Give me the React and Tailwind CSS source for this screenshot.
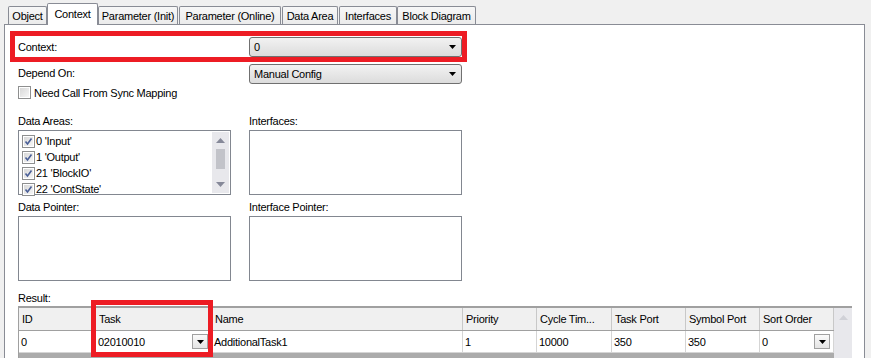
import React from 'react';

const tabs = [
    { label: 'Object', w: 'w-[39px]', ml: '' },
    { label: 'Context', w: 'w-[51px]', ml: '', active: true },
    { label: 'Parameter (Init)', w: 'w-[80px]', ml: '' },
    { label: 'Parameter (Online)', w: 'w-[102px]', ml: 'ml-[1px]' },
    { label: 'Data Area', w: 'w-[56px]', ml: 'ml-[1px]' },
    { label: 'Interfaces', w: 'w-[58px]', ml: 'ml-[1px]' },
    { label: 'Block Diagram', w: 'w-[79px]', ml: '' },
];

const dataAreas = ["0 'Input'", "1 'Output'", "21 'BlockIO'", "22 'ContState'"];

const columns = [
    { label: 'ID', value: '0' },
    { label: 'Task', value: '02010010', drop: true },
    { label: 'Name', value: 'AdditionalTask1' },
    { label: 'Priority', value: '1' },
    { label: 'Cycle Tim...', value: '10000' },
    { label: 'Task Port', value: '350' },
    { label: 'Symbol Port', value: '350' },
    { label: 'Sort Order', value: '0', drop: true },
];

const Arrow = () => (
    <svg width="7" height="4" viewBox="0 0 7 4" className="block">
        <path d="M0 0 H7 L3.5 4 Z" fill="#000" />
    </svg>
);

const Combo = ({ value }) => (
    <div className="w-[213px] h-[20px] rounded-[3px] border border-[#707070] bg-gradient-to-b from-[#f2f2f2] to-[#dcdcdc] flex items-center pl-[4px] pr-[5px]">
        <span className="flex-1">{value}</span>
        <Arrow />
    </div>
);

const CheckBox = ({ checked }) => (
    <div className="w-[13px] h-[13px] border border-[#8e8f8f] bg-white p-[1px] shrink-0">
        <div className="w-full h-full bg-gradient-to-br from-[#d8d8d8] to-[#f6f6f6] relative">
            {checked && (
                <svg width="9" height="9" viewBox="0 0 9 9" className="absolute left-0 top-0">
                    <path d="M1.5 4.5 L3.5 7 L7.5 1.5" stroke="#4a5f97" strokeWidth="1.6" fill="none" />
                </svg>
            )}
        </div>
    </div>
);

const Box = ({ children }) => (
    <div className="w-[213px] h-[65px] border border-[#828790] bg-white">{children}</div>
);

const CellDrop = () => (
    <div className="w-[16px] h-[15px] border border-[#a0a0a0] bg-gradient-to-b from-[#fafafa] to-[#e4e4e4] flex items-center justify-center">
        <Arrow />
    </div>
);

export default function App() {
    return (
        <div
            className="w-[871px] h-[358px] bg-[#f0f0f0] overflow-hidden relative text-[11px] leading-[14px] text-black tracking-[-0.25px]"
            style={{ fontFamily: '"Liberation Sans", Arial, sans-serif' }}
        >
            <div className="flex items-end h-[24px] pl-[8px]">
                {tabs.map((t) =>
                    t.active ? (
                        <div
                            key={t.label}
                            className={`${t.w} h-[22px] -mb-[1px] relative z-10 bg-white border border-b-0 border-[#898c95] rounded-t-[2px] flex justify-center pt-[3px]`}
                        >
                            {t.label}
                        </div>
                    ) : (
                        <div
                            key={t.label}
                            className={`${t.w} ${t.ml} h-[18px] bg-gradient-to-b from-[#f7f7f7] to-[#ebebeb] border border-b-0 border-[#898c95] rounded-t-[2px] flex justify-center pt-[2px]`}
                        >
                            {t.label}
                        </div>
                    )
                )}
            </div>

            <div className="ml-[4px] w-[861px] h-[334px] bg-white border-t border-l border-r border-[#898c95] pl-[13px] pt-[12px]">
                <div className="flex h-[20px]">
                    <div className="w-[231px] pt-[3px]">Context:</div>
                    <Combo value="0" />
                </div>
                <div className="flex h-[20px] mt-[7px]">
                    <div className="w-[231px] pt-[2px]">Depend On:</div>
                    <Combo value="Manual Config" />
                </div>
                <div className="flex items-center h-[13px] mt-[2px] gap-[3px]">
                    <CheckBox />
                    <span>Need Call From Sync Mapping</span>
                </div>

                <div className="flex gap-[18px] mt-[15px]">
                    <div>
                        <div className="h-[16px]">Data Areas:</div>
                        <Box>
                            <div className="flex h-full">
                                <div className="flex-1 pl-[3px] pt-[2px]">
                                    {dataAreas.map((d) => (
                                        <div key={d} className="flex items-center gap-[1px] h-[16px]">
                                            <CheckBox checked />
                                            <span>{d}</span>
                                        </div>
                                    ))}
                                </div>
                                <div className="w-[17px] mr-[1px] my-[1px] bg-[#e8e8ec] flex flex-col items-center justify-between py-[6px]">
                                    <svg width="9" height="5" viewBox="0 0 9 5"><path d="M0 5 L4.5 0 L9 5 Z" fill="#868999" /></svg>
                                    <div className="w-[9px] h-[20px] bg-[#c2c3c9] -mt-[8px]" />
                                    <svg width="9" height="5" viewBox="0 0 9 5"><path d="M0 0 L9 0 L4.5 5 Z" fill="#868999" /></svg>
                                </div>
                            </div>
                        </Box>
                    </div>
                    <div>
                        <div className="h-[16px]">Interfaces:</div>
                        <Box />
                    </div>
                </div>

                <div className="flex gap-[18px] mt-[5px]">
                    <div>
                        <div className="h-[16px]">Data Pointer:</div>
                        <Box />
                    </div>
                    <div>
                        <div className="h-[16px]">Interface Pointer:</div>
                        <Box />
                    </div>
                </div>

                <div className="h-[17px] mt-[8px] pt-[2px]">Result:</div>
                <div className="flex w-[834px] h-[60px] border-l border-t-2 border-[#a0a0a0]">
                    <div className="w-[815px] flex flex-col">
                        <div className="grid grid-cols-[77px_116px_251px_74px_75px_74px_74px_74px] h-[23px] bg-[#f0f0f0] border-b border-[#a0a0a0]">
                            {columns.map((c) => (
                                <div key={c.label} className="border-r border-[#c8c8c8] pl-[3px] flex items-center whitespace-nowrap overflow-hidden">
                                    {c.label}
                                </div>
                            ))}
                        </div>
                        <div className="grid grid-cols-[77px_116px_251px_74px_75px_74px_74px_74px] h-[22px] bg-white border-b border-[#d5d5d5]">
                            {columns.map((c) => (
                                <div key={c.label} className="border-r border-[#d5d5d5] pl-[2px] pr-[3px] flex items-center whitespace-nowrap">
                                    <span className="flex-1">{c.value}</span>
                                    {c.drop && <CellDrop />}
                                </div>
                            ))}
                        </div>
                        <div className="flex-1 bg-[#ababab]" />
                    </div>
                    <div className="w-[19px] bg-[#e8e8ec] flex justify-center pt-[7px]">
                        <svg width="9" height="5" viewBox="0 0 9 5"><path d="M0 5 L4.5 0 L9 5 Z" fill="#d0d1d7" /></svg>
                    </div>
                </div>
            </div>

            <div className="absolute left-[10px] top-[31px] w-[457px] h-[31px] border-[5px] border-[#ed1c24]" />
            <div className="absolute left-[91px] top-[300px] w-[122px] h-[57px] border-[5px] border-[#ed1c24]" />
        </div>
    );
}
